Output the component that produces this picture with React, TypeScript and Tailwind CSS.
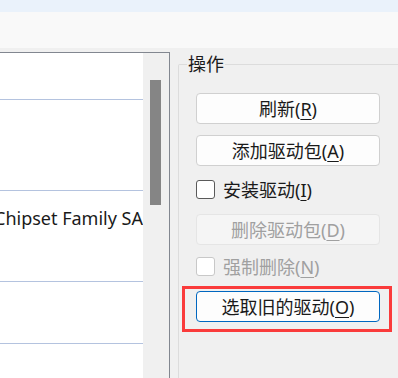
import React from 'react';

const font = { fontFamily: '"Noto Sans", "Noto Sans CJK SC", sans-serif' };

function Btn({ label, hot, disabled, focus }: { label: string; hot: string; disabled?: boolean; focus?: boolean }) {
    const base = 'h-[31px] w-[184px] rounded-[4px] border flex items-center justify-center text-[18px] leading-none';
    const look = disabled
        ? 'bg-[#f5f5f5] border-[#e5e5e5] text-[#a0a0a0]'
        : focus
            ? 'bg-[#fdfdfd] border-[#0067c0] text-[#1a1a1a]'
            : 'bg-[#fdfdfd] border-[#d0d0d0] text-[#1a1a1a]';
    return (
        <div className={`${base} ${look}`}>
            <span>
                {label}(<span className="underline underline-offset-[3px]">{hot}</span>)
            </span>
        </div>
    );
}

function Check({ label, hot, disabled }: { label: string; hot: string; disabled?: boolean }) {
    return (
        <div className="flex items-center gap-[8px] h-[19px]">
            <div
                className={`w-[19px] h-[19px] rounded-[3px] border bg-white ${disabled ? 'border-[#c8c8c8]' : 'border-[#5a5a5a]'}`}
            ></div>
            <span className={`text-[18px] leading-none ${disabled ? 'text-[#a0a0a0]' : 'text-[#1a1a1a]'}`}>
                {label}(<span className="underline underline-offset-[3px]">{hot}</span>)
            </span>
        </div>
    );
}

export default function App() {
    return (
        <div className="w-[398px] h-[378px] overflow-hidden bg-[#f0f0f0] flex flex-col" style={font}>
            {/* title strip + toolbar */}
            <div className="h-[12px] bg-[#eaf2fb]"></div>
            <div className="h-[36px] bg-[#f9f9f9]"></div>

            <div className="flex flex-1 pt-[4px]">
                {/* list */}
                <div className="w-[170px] flex border-t border-r border-[#828790] bg-white">
                    <div className="w-[143px] flex flex-col">
                        <div className="h-[47px] border-b border-[#b4c3df]"></div>
                        <div className="h-[91px] border-b border-[#b4c3df]"></div>
                        <div className="h-[91px] border-b border-[#b4c3df] overflow-hidden">
                            <div className="ml-[-6px] mt-[14px] text-[18px] leading-[26px] text-[#1a1a1a] whitespace-nowrap">
                                Chipset Family SA
                            </div>
                        </div>
                        <div className="h-[62px] border-b border-[#b4c3df]"></div>
                    </div>
                    <div className="w-[26px] bg-[#f0f0f0] pt-[27px] pl-[7px]">
                        <div className="w-[11px] h-[125px] bg-[#858585]"></div>
                    </div>
                </div>

                {/* group box */}
                <div className="ml-[8px] mt-[12px] flex-1 relative border-l border-t border-r border-[#dcdcdc] rounded-tl-[2px] rounded-tr-[2px] px-[17px] pt-[28px] flex flex-col">
                    <div className="absolute top-[-13px] left-[8px] px-[1px] bg-[#f0f0f0] text-[18px] leading-[24px] text-[#1a1a1a]">
                        操作
                    </div>
                    <Btn label="刷新" hot="R" />
                    <div className="mt-[11px]">
                        <Btn label="添加驱动包" hot="A" />
                    </div>
                    <div className="mt-[14px]">
                        <Check label="安装驱动" hot="I" />
                    </div>
                    <div className="mt-[15px]">
                        <Btn label="删除驱动包" hot="D" disabled />
                    </div>
                    <div className="mt-[12px]">
                        <Check label="强制删除" hot="N" disabled />
                    </div>
                    <div className="mt-[10px] ml-[-14px] w-[210px] border-[3px] border-[#fa3b3b] pt-[2px] pb-[7px] pl-[11px]">
                        <Btn label="选取旧的驱动" hot="O" focus />
                    </div>
                </div>
            </div>
        </div>
    );
}
